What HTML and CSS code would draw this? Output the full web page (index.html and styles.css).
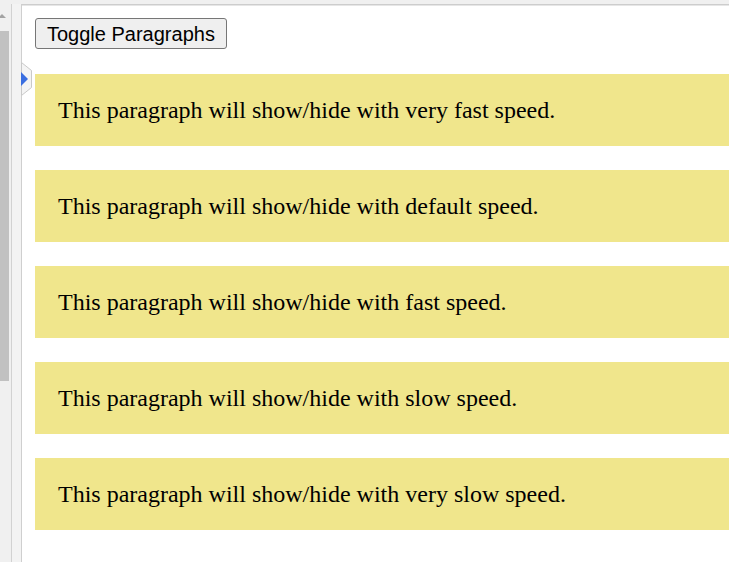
FILE: index.html
```html
<!DOCTYPE html>
<html>
<head>
<meta charset="utf-8">
<link rel="stylesheet" href="styles.css">
</head>
<body>
<div class="app">
  <div class="scroll">
    <svg class="arrow" width="9" height="8" viewBox="0 0 9 8"><polygon points="-2,5 2,1 6,5" fill="#a3a3a3"/></svg>
    <div class="thumb"></div>
  </div>
  <div class="panel"></div>
  <div class="main">
    <div class="toolbar"><button class="btn">Toggle Paragraphs</button></div>
    <p class="para">This paragraph will show/hide with very fast speed.</p>
    <p class="para">This paragraph will show/hide with default speed.</p>
    <p class="para">This paragraph will show/hide with fast speed.</p>
    <p class="para">This paragraph will show/hide with slow speed.</p>
    <p class="para">This paragraph will show/hide with very slow speed.</p>
  </div>
  <svg class="marker" width="12" height="34" viewBox="0 0 12 34">
    <polygon points="0.5,0.5 10.5,8.5 10.5,25.5 0.5,33.5" fill="#f4f4f4" stroke="#c9c9c9"/>
    <polygon points="0,10 7,17 0,24" fill="#3a6ee0"/>
  </svg>
</div>
</body>
</html>
```

FILE: styles.css
```css
html, body {
  margin: 0;
  padding: 0;
  height: 100%;
  overflow: hidden;
  background: #f0f0f0;
}

.app {
  position: relative;
  display: flex;
  height: 100%;
  box-sizing: border-box;
  padding-top: 4px;
}

.scroll {
  width: 11px;
  flex: none;
  display: flex;
  flex-direction: column;
  background: #f0f0f0;
  margin-top: -4px;
}

.arrow {
  display: block;
  margin-top: 13px;
}

.thumb {
  width: 9px;
  height: 350px;
  margin-top: 10px;
  background: #c1c1c1;
}

.panel {
  width: 9px;
  flex: none;
  background: #f3f3f3;
  border-left: 1px solid #d2d2d2;
}

.main {
  flex: 1;
  min-width: 0;
  background: #ffffff;
  border-left: 1px solid #cfcfcf;
  border-top: 1px solid #cdcdcd;
  box-shadow: inset 0 1px 0 #e6e6e6;
  padding: 13px 0 0 13px;
  display: flex;
  flex-direction: column;
  gap: 24px;
}

.toolbar {
  display: flex;
  margin-bottom: 1px;
}

.btn {
  height: 31px;
  box-sizing: border-box;
  padding: 1px 11px 0;
  font-family: Arial, "Liberation Sans", sans-serif;
  font-size: 20px;
  color: #000;
  background: #efefef;
  border: 1px solid #767676;
  border-radius: 3px;
}

.para {
  margin: 0;
  padding: 22px 23px;
  background: #f0e68c;
  font-family: "Times New Roman", "Liberation Serif", serif;
  font-size: 24px;
  line-height: 28px;
  color: #000;
  white-space: nowrap;
}

.marker {
  position: absolute;
  left: 21px;
  top: 62px;
}
```
